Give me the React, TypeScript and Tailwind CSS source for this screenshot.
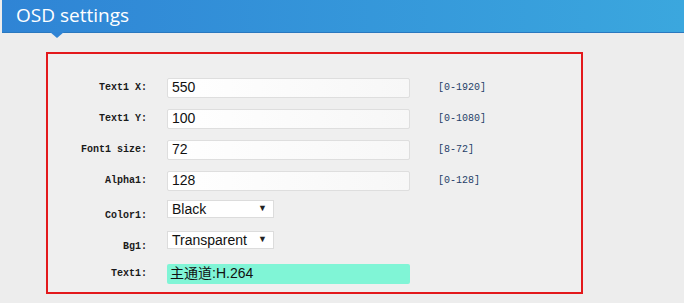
const rows = [
  { label: 'Text1 X:', value: '550', range: '[0-1920]' },
  { label: 'Text1 Y:', value: '100', range: '[0-1080]' },
  { label: 'Font1 size:', value: '72', range: '[8-72]' },
  { label: 'Alpha1:', value: '128', range: '[0-128]' },
];

function Label({ text, className = '' }: { text: string; className?: string }) {
  return (
    <div
      className={`w-[99px] shrink-0 text-right text-[10px] font-bold text-[#1a1a1a] ${className}`}
      style={{ fontFamily: '"Liberation Mono", "Courier New", monospace' }}
    >
      {text}
    </div>
  );
}

function FakeSelect({ value }: { value: string }) {
  return (
    <div className="ml-[20px] flex h-[18px] w-[107px] items-center justify-between border border-[#dcdcdc] bg-white pl-[4px] pr-[6px] text-[14px] leading-none text-[#111]">
      <span style={{ fontFamily: '"Liberation Sans", Arial, sans-serif' }}>{value}</span>
      <span className="text-[9px] text-[#222]">▼</span>
    </div>
  );
}

export default function App() {
  return (
    <div
      className="h-[303px] w-[684px] overflow-hidden bg-[#ededed]"
      style={{ fontFamily: '"Liberation Sans", Arial, sans-serif' }}
    >
      {/* Header */}
      <div className="relative ml-[2px] h-[33px] border-b border-[#2a78bf] bg-gradient-to-r from-[#2f84d5] to-[#3ba7de]">
        <h1
          className="pl-[14px] pt-[3px] text-[19px] leading-[24px] text-white"
          style={{ fontFamily: '"Open Sans", "Noto Sans", sans-serif' }}
        >
          OSD settings
        </h1>
        <div className="absolute left-[48px] top-[32px] h-0 w-0 border-x-[7px] border-t-[6px] border-x-transparent border-t-[#2f84d5]" />
      </div>

      {/* Settings box */}
      <div className="ml-[46px] mt-[19px] h-[242px] w-[537px] border-2 border-[#e3191c] bg-[#efefef] pt-[18px]">
        {rows.map((r) => (
          <div key={r.label} className="flex h-[31px] items-center">
            <Label text={r.label} />
            <input
              readOnly
              value={r.value}
              className="ml-[20px] h-[20px] w-[243px] rounded-[2px] border border-[#dedede] bg-gradient-to-r from-white to-[#f7f7f7] px-[4px] text-[14px] text-[#111] outline-none"
            />
            <div
              className="ml-[28px] text-[10px] text-[#1f4068]"
              style={{ fontFamily: '"Liberation Mono", "Courier New", monospace' }}
            >
              {r.range}
            </div>
          </div>
        ))}

        <div className="flex h-[31px] items-center">
          <Label text="Color1:" className="mt-[8px]" />
          <div className="-mt-[6px]">
            <FakeSelect value="Black" />
          </div>
        </div>

        <div className="flex h-[31px] items-center">
          <Label text="Bg1:" className="mt-[8px]" />
          <div className="-mt-[6px]">
            <FakeSelect value="Transparent" />
          </div>
        </div>

        <div className="flex h-[31px] items-center">
          <Label text="Text1:" />
          <input
            readOnly
            value="主通道:H.264"
            className="ml-[20px] h-[20px] w-[243px] rounded-[2px] bg-[#80f5d6] px-[3px] text-[14px] text-[#111] outline-none"
            style={{ fontFamily: '"Liberation Sans", Arial, "Noto Sans CJK SC", sans-serif' }}
          />
        </div>
      </div>
    </div>
  );
}
